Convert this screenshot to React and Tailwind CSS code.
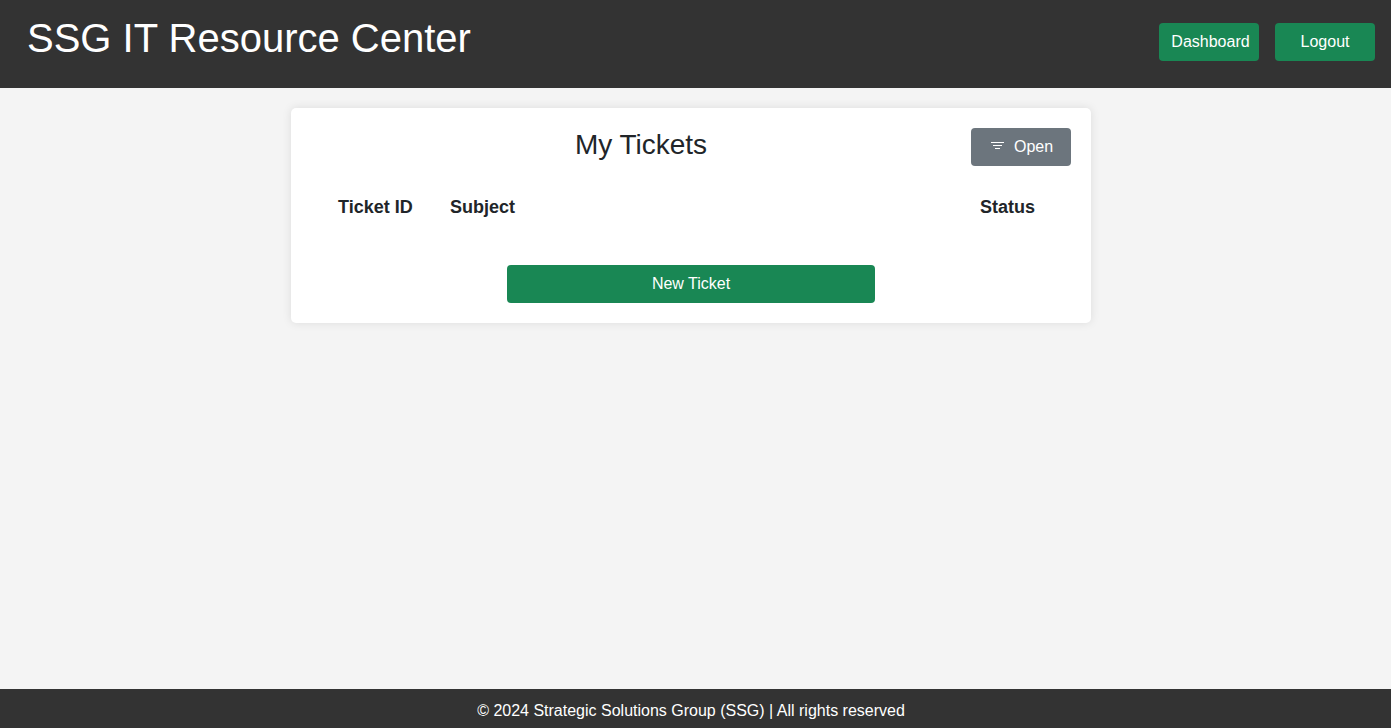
import React from "react";

const green = "flex h-[38px] items-center justify-center rounded bg-[#198754] pb-px text-base text-white";

function FilterIcon() {
  return (
    <svg viewBox="0 0 16 16" fill="none" stroke="currentColor" className="mr-[9px] mb-px h-4 w-4" aria-hidden="true">
      <path d="M2 4.5h13M4 7.5h9M6 10.5h5" />
    </svg>
  );
}

function Header() {
  return (
    <header className="flex h-[88px] shrink-0 justify-between bg-[#333] pr-4 pl-[27px] text-white">
      <h1 className="mt-[14px] text-[40px] leading-[48px]">SSG IT Resource Center</h1>
      <nav className="mt-[23px] flex gap-4">
        <button className={green + " w-[100px] pl-[3px]"}>Dashboard</button>
        <button className={green + " w-[100px]"}>Logout</button>
      </nav>
    </header>
  );
}

function Tickets() {
  return (
    <section className="mx-auto mt-5 h-[215px] w-[800px] rounded-[5px] bg-white p-5 shadow-[0_0_10px_rgba(0,0,0,0.1)]">
      <div className="flex">
        <h2 className="w-[660px] text-center text-[28px] leading-[33.6px]">My Tickets</h2>
        <button className="ml-auto flex h-[38px] w-[100px] items-center rounded bg-[#6c757d] pl-[18px] pb-px text-base text-white">
          <FilterIcon />
          Open
        </button>
      </div>
      <div className="mt-[27px] flex text-lg leading-7 font-bold">
        <span className="w-[112px] pl-[27px] whitespace-nowrap">Ticket ID</span>
        <span className="grow pl-[27px]">Subject</span>
        <span className="pr-9">Status</span>
      </div>
      <button className={green + " mx-auto mt-11 w-[368px]"}>New Ticket</button>
    </section>
  );
}

export default function App() {
  return (
    <div className="flex h-screen flex-col bg-[#f4f4f4] font-['Liberation_Sans',Arial,sans-serif] text-[#212529]">
      <Header />
      <main className="grow pr-[9px]">
        <Tickets />
      </main>
      <footer className="flex h-[39px] shrink-0 items-center justify-center bg-[#333] pt-1 pr-[9px] text-base text-white">
        © 2024 Strategic Solutions Group (SSG) | All rights reserved
      </footer>
    </div>
  );
}
